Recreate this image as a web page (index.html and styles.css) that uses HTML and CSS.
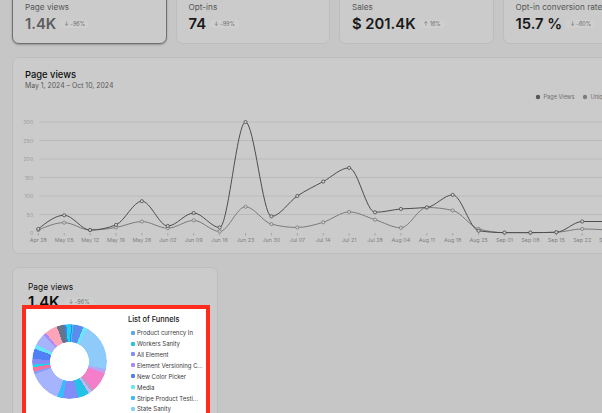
FILE: index.html
```html
<!DOCTYPE html>
<html lang="en">
<head>
<meta charset="utf-8">
<title>Funnels dashboard</title>
<link rel="stylesheet" href="styles.css">
</head>
<body>
<main class="page">
  <section class="stats">
    <div class="stat stat-active">
      <div class="stat-label">Page views</div>
      <div class="stat-row"><span class="stat-value stat-value-muted">1.4K</span><span class="badge">↓ -96%</span></div>
    </div>
    <div class="stat">
      <div class="stat-label">Opt-ins</div>
      <div class="stat-row"><span class="stat-value">74</span><span class="badge">↓ -99%</span></div>
    </div>
    <div class="stat">
      <div class="stat-label">Sales</div>
      <div class="stat-row"><span class="stat-value">$ 201.4K</span><span class="badge">↑ 16%</span></div>
    </div>
    <div class="stat">
      <div class="stat-label">Opt-in conversion rate</div>
      <div class="stat-row"><span class="stat-value">15.7 %</span><span class="badge">↓ -60%</span></div>
    </div>
  </section>

  <section class="card chart-card">
    <div class="chart-head">
      <h2 class="chart-title">Page views</h2>
      <div class="chart-sub">May 1, 2024 – Oct 10, 2024</div>
    </div>
    <svg class="chart" id="chart" width="600" height="160" viewBox="0 0 600 160">
      <g class="legend-top">
        <circle class="dot-1" cx="525" cy="6" r="2.2"></circle>
        <text x="530.5" y="8">Page Views</text>
        <circle class="dot-2" cx="572" cy="6" r="2.2"></circle>
        <text x="577.5" y="8">Unique Visitors</text>
      </g>
    </svg>
  </section>

  <section class="card funnel-card">
    <div class="funnel-title">Page views</div>
    <div class="stat-row"><span class="funnel-value">1.4K</span><span class="badge">↓ -96%</span></div>
    <div class="spotlight">
      <div class="donut"></div>
      <div class="legend">
        <div class="legend-title">List of Funnels</div>
        <ul class="legend-list">
          <li><span class="dot c1"></span>Product currency In</li>
          <li><span class="dot c2"></span>Workers Sanity</li>
          <li><span class="dot c3"></span>All Element</li>
          <li><span class="dot c4"></span>Element Versioning C...</li>
          <li><span class="dot c5"></span>New Color Picker</li>
          <li><span class="dot c6"></span>Media</li>
          <li><span class="dot c7"></span>Stripe Product Testi...</li>
          <li><span class="dot c8"></span>State Sanity</li>
        </ul>
      </div>
    </div>
  </section>
</main>
<div class="overlay"></div>
<script src="script.js"></script>
</body>
</html>
```

FILE: styles.css
```css
* { box-sizing: border-box; margin: 0; padding: 0; }
html, body { overflow: hidden; }
body {
  width: 602px;
  height: 413px;
  background: #f4f4f4;
  font-family: Inter, "Noto Sans", sans-serif;
  color: #111;
}
.page { padding-left: 12px; }

/* top stats */
.stats {
  display: grid;
  grid-template-columns: repeat(4, 154.5px);
  gap: 9px;
  margin-top: -8px;
}
.stat {
  background: #fbfbfb;
  border: 1px solid #e9e9e9;
  border-radius: 7px;
  padding: 9px 12px 10px;
  height: 52px;
}
.stat-active {
  border-color: #8a8a8a;
  box-shadow: 0 1px 2px rgba(0,0,0,.25);
}
.stat-label {
  font-size: 8.2px;
  line-height: 11px;
  color: #6b6b6b;
  white-space: nowrap;
}
.stat-row {
  display: flex;
  align-items: center;
  gap: 4px;
  margin-top: 2px;
  height: 18px;
}
.stat-value {
  font-size: 14.8px;
  line-height: 18px;
  font-weight: 600;
  color: #222;
  white-space: nowrap;
}
.stat-value-muted { color: #737373; }
.badge {
  font-size: 5.5px;
  line-height: 8px;
  padding: 0 4px;
  border-radius: 6px;
  background: #ffffff;
  color: #8a8a8a;
  white-space: nowrap;
}

/* cards */
.card {
  background: #fbfbfb;
  border: 1px solid #e9e9e9;
  border-radius: 7px;
}
.chart-card {
  margin-top: 13px;
  width: 600px;
  padding-bottom: 2px;
}
.chart-head { padding: 11px 12px 0; }
.chart-title {
  font-size: 9.4px;
  line-height: 12px;
  font-weight: 500;
  color: #111;
}
.chart-sub {
  font-size: 6.9px;
  line-height: 10px;
  color: #6e6e6e;
}
.chart { display: block; }
.chart text { font-family: Inter, "Noto Sans", sans-serif; }
.chart .grid line { stroke: #e6e6e6; stroke-width: 1; }
.chart .y-labels text { font-size: 5.4px; fill: #c2c2c2; text-anchor: end; }
.chart .x-labels text { font-size: 5.4px; fill: #9e9e9e; text-anchor: middle; }
.chart .ticks line { stroke: #b5b5b5; stroke-width: .7; }
.chart .series path { fill: none; stroke-width: 1; }
.chart .series circle { fill: #fbfbfb; stroke-width: .8; }
.chart .series-1 path, .chart .series-1 circle { stroke: #606060; }
.chart .series-2 path, .chart .series-2 circle { stroke: #979797; }
.chart .legend-top text { font-size: 5.6px; fill: #8a8a8a; }
.chart .dot-1 { fill: #6a6a6a; }
.chart .dot-2 { fill: #9a9a9a; }

/* funnel card */
.funnel-card {
  margin-top: 13px;
  width: 206px;
  height: 170px;
  padding: 13.5px 15px 0;
}
.funnel-title {
  font-size: 8.4px;
  line-height: 11px;
  color: #111;
}
.funnel-value {
  font-size: 15px;
  line-height: 18px;
  font-weight: 600;
  color: #111;
}
.funnel-card .stat-row { margin-top: 0; gap: 5px; }

/* highlighted element of the tour */
.spotlight {
  position: relative;
  z-index: 10;
  margin: -5.5px 0 0 -6px;
  width: 188px;
  height: 130px;
  background: #fff;
  border: 4px solid #ff2b1c;
  display: flex;
  align-items: flex-start;
  padding-left: 5.5px;
}
.donut {
  flex: none;
  margin-top: 14.5px;
  width: 75px;
  height: 75px;
  border-radius: 50%;
  background: conic-gradient(
    #22d3ee 0deg 2deg, #3b82f6 2deg 4deg, #22d3ee 4deg 6deg,
    #5b8def 6deg 22deg, #67e8f9 22deg 28deg,
    #8ecbfa 28deg 102deg, #b4a7f5 102deg 108deg,
    #f47ec9 108deg 140deg, #a8a8c0 140deg 144deg, #c4b5fd 144deg 149deg,
    #22c3e6 149deg 166deg, #818cf8 166deg 190deg, #38bdf8 190deg 199deg,
    #a5b4fc 199deg 250deg, #8b9cf7 250deg 254deg, #f472a0 254deg 261deg,
    #22d3ee 261deg 265deg, #818cf8 265deg 274deg, #4f80f5 274deg 290deg,
    #67e8f9 290deg 297deg, #a5b4fc 297deg 316deg, #a78bfa 316deg 320deg,
    #fda4b8 320deg 340deg, #64748b 340deg 352deg, #3b82f6 352deg 355deg,
    #22d3ee 355deg 360deg);
  -webkit-mask: radial-gradient(circle closest-side, transparent 51%, #000 52.5%);
  mask: radial-gradient(circle closest-side, transparent 51%, #000 52.5%);
}
.legend {
  margin: 6px 0 0 21.5px;
  width: 78px;
}
.legend-title {
  font-size: 7.4px;
  line-height: 10px;
  font-weight: 500;
  color: #111;
  white-space: nowrap;
}
.legend-list {
  list-style: none;
  margin-top: 2.25px;
}
.legend-list li {
  display: flex;
  align-items: center;
  height: 10.9px;
  font-size: 6px;
  color: #3a3a3a;
  white-space: nowrap;
  padding-left: 3px;
}
.dot {
  flex: none;
  width: 4px;
  height: 4px;
  border-radius: 1.2px;
  margin-right: 2px;
}
.c1 { background: #5aa6f2; }
.c2 { background: #22c3e6; }
.c3 { background: #818cf8; }
.c4 { background: #a78bfa; }
.c5 { background: #4f7cf7; }
.c6 { background: #67e8f9; }
.c7 { background: #38bdf8; }
.c8 { background: #7dd3fc; }

.overlay {
  position: fixed;
  inset: 0;
  background: rgba(0,0,0,.19);
  z-index: 5;
}
```

FILE: script.js
```js
(function () {
  var NS = 'http://www.w3.org/2000/svg';
  var svg = document.getElementById('chart');
  if (!svg) return;
  var dates = ['Apr 28','May 05','May 12','May 19','May 26','Jun 02','Jun 09','Jun 16','Jun 23','Jun 30','Jul 07','Jul 14','Jul 21','Jul 28','Aug 04','Aug 11','Aug 18','Aug 25','Sep 01','Sep 08','Sep 15','Sep 22','Sep 29'];
  var views = [11,48,8,22,86,19,54,15,300,45,100,139,176,56,65,69,103,6,1,1,2,31,31];
  var uniques = [8,28,8,15,31,13,34,4,71,24,15,29,57,36,14,69,61,11,1,1,2,11,8];
  var X0 = 25.3, DX = 25.9, Y0 = 142, K = 0.37;
  function x(i) { return X0 + DX * i; }
  function y(v) { return Y0 - v * K; }
  function add(parent, name, attrs, text) {
    var node = document.createElementNS(NS, name);
    for (var a in attrs) node.setAttribute(a, attrs[a]);
    if (text != null) node.textContent = text;
    parent.appendChild(node);
    return node;
  }
  var first = svg.firstChild;
  var grid = document.createElementNS(NS, 'g');
  grid.setAttribute('class', 'grid');
  svg.insertBefore(grid, first);
  var v;
  for (v = 50; v <= 300; v += 50) add(grid, 'line', {x1: 26.3, x2: 600, y1: y(v), y2: y(v)});
  var ylab = add(svg, 'g', {'class': 'y-labels'});
  for (v = 0; v <= 300; v += 50) add(ylab, 'text', {x: 20.3, y: y(v) + 2}, String(v));
  var ticks = add(svg, 'g', {'class': 'ticks'});
  var xlab = add(svg, 'g', {'class': 'x-labels'});
  dates.forEach(function (d, i) {
    add(ticks, 'line', {x1: x(i), x2: x(i), y1: Y0, y2: Y0 + 2.5});
    add(xlab, 'text', {x: x(i), y: 150.5}, d);
  });

  function sign(n) { return n < 0 ? -1 : (n > 0 ? 1 : 0); }
  function tangents(p) {
    var n = p.length, t = new Array(n), i;
    for (i = 1; i < n - 1; i++) {
      var h0 = p[i][0] - p[i - 1][0], h1 = p[i + 1][0] - p[i][0];
      var s0 = (p[i][1] - p[i - 1][1]) / h0, s1 = (p[i + 1][1] - p[i][1]) / h1;
      var pp = (s0 * h1 + s1 * h0) / (h0 + h1);
      t[i] = (sign(s0) + sign(s1)) * Math.min(Math.abs(s0), Math.abs(s1), 0.5 * Math.abs(pp)) || 0;
    }
    var h = p[1][0] - p[0][0];
    t[0] = (3 * (p[1][1] - p[0][1]) / h - t[1]) / 2;
    h = p[n - 1][0] - p[n - 2][0];
    t[n - 1] = (3 * (p[n - 1][1] - p[n - 2][1]) / h - t[n - 2]) / 2;
    return t;
  }
  function curve(p) {
    var t = tangents(p), d = 'M' + p[0][0].toFixed(2) + ',' + p[0][1].toFixed(2);
    for (var i = 0; i < p.length - 1; i++) {
      var h = (p[i + 1][0] - p[i][0]) / 3;
      d += 'C' + (p[i][0] + h).toFixed(2) + ',' + (p[i][1] + h * t[i]).toFixed(2) + ' ' +
           (p[i + 1][0] - h).toFixed(2) + ',' + (p[i + 1][1] - h * t[i + 1]).toFixed(2) + ' ' +
           p[i + 1][0].toFixed(2) + ',' + p[i + 1][1].toFixed(2);
    }
    return d;
  }
  function draw(values, cls) {
    var pts = values.map(function (val, i) { return [x(i), y(val)]; });
    var g = add(svg, 'g', {'class': 'series ' + cls});
    add(g, 'path', {d: curve(pts)});
    pts.forEach(function (p) { add(g, 'circle', {cx: p[0], cy: p[1], r: 1.6}); });
  }
  draw(uniques, 'series-2');
  draw(views, 'series-1');
})();
```
